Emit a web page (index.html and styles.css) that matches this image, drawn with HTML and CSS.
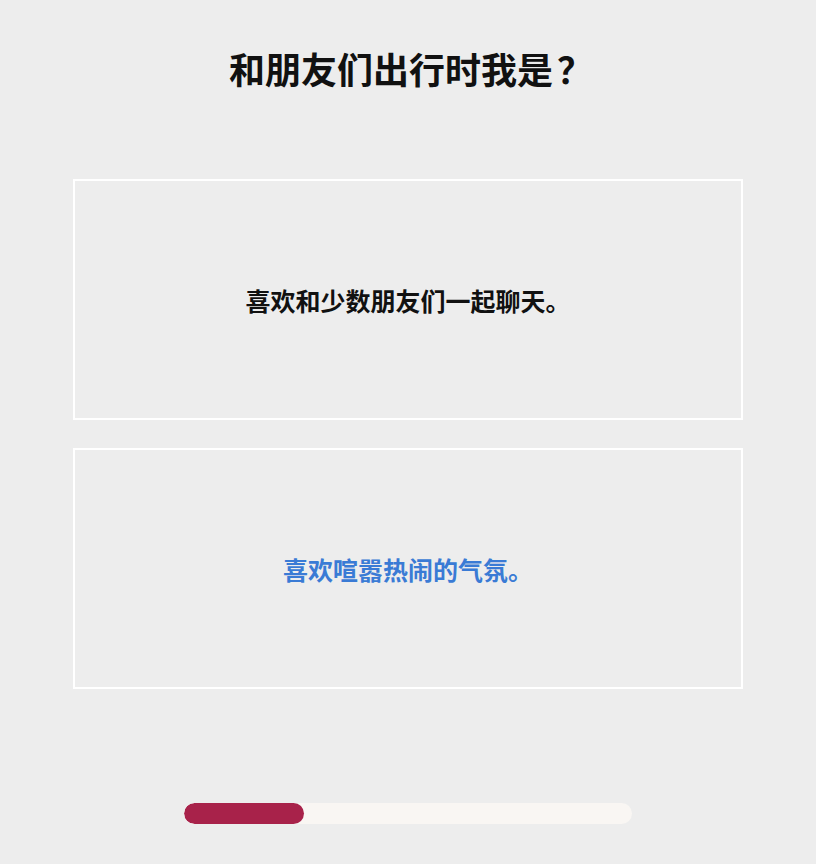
FILE: index.html
```html
<!DOCTYPE html>
<html lang="zh">
<head>
<meta charset="utf-8">
<link rel="stylesheet" href="styles.css">
</head>
<body>
<div class="page">
  <h1 class="title">和朋友们出行时我是<span class="qmark">？</span></h1>
  <div class="options">
    <div class="option"><span class="option-text">喜欢和少数朋友们一起聊天。</span></div>
    <div class="option option-active"><span class="option-text">喜欢喧嚣热闹的气氛。</span></div>
  </div>
  <div class="progress"><div class="progress-fill"></div></div>
</div>
</body>
</html>
```
FILE: styles.css
```css
html, body {
  margin: 0;
  padding: 0;
  background: #ededed;
}
body {
  font-family: "Noto Sans CJK SC", "Noto Sans", sans-serif;
  width: 816px;
  height: 864px;
  overflow: hidden;
}
.page {
  display: flex;
  flex-direction: column;
  align-items: center;
}
.title {
  margin: 0;
  height: 139px;
  padding-top: 44px;
  padding-left: 6px;
  box-sizing: border-box;
  font-size: 36px;
  line-height: 48px;
  font-weight: 700;
  color: #111;
}
.qmark {
  margin-left: 4px;
}
.options {
  margin-top: 40px;
  width: 670px;
  display: flex;
  flex-direction: column;
  gap: 28px;
}
.option {
  height: 241px;
  box-sizing: border-box;
  border: 2px solid #ffffff;
  display: flex;
  align-items: center;
  justify-content: center;
}
.option-text {
  font-size: 25px;
  font-weight: 700;
  color: #111;
}
.option-active .option-text {
  color: #3a7bd5;
}
.progress {
  margin-top: 114px;
  width: 448px;
  height: 21px;
  border-radius: 11px;
  background: #f9f6f3;
  overflow: hidden;
}
.progress-fill {
  width: 120px;
  height: 100%;
  border-radius: 11px;
  background: #a8224a;
}
```
